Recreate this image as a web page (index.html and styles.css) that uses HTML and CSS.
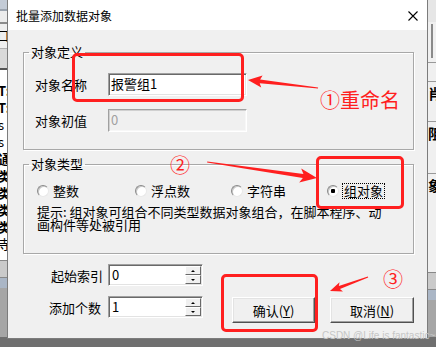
FILE: index.html
```html
<!DOCTYPE html>
<html lang="zh-CN">
<head>
    <meta charset="UTF-8">
    <title>批量添加数据对象</title>
    <link rel="stylesheet" href="styles.css">
</head>
<body>
    <div class="screen">
        <div class="backdrop">
            <div class="bg-left">
                <div class="blk tb"></div>
                <div class="blk lt"></div>
                <div class="blk lt2"><span>口</span></div>
                <div class="blk mid"></div>
                <div class="blk dk"></div>
                <div class="list">
                    <span class="bold">T:</span>
                    <span class="bold">T:</span>
                    <span>s</span>
                    <span>s</span>
                    <span class="bold">通</span>
                    <span class="bold">类</span>
                    <span class="bold">类</span>
                    <span class="bold">类</span>
                    <span class="bold">类</span>
                    <span>寺</span>
                </div>
                <div class="blk ln2"></div>
                <div class="blk blu"></div>
                <div class="blk rest"></div>
            </div>
            <div class="bg-right">
                <div class="blk lt"></div>
                <div class="blk bar"><i></i></div>
                <div class="cells">
                    <span>肖</span>
                    <span>阻</span>
                    <span class="gap">象</span>
                </div>
                <div class="blk ln2"></div>
                <div class="blk blu"></div>
                <div class="blk rest"></div>
            </div>
        </div>

        <div class="dialog">
            <div class="titlebar">
                <span class="title">批量添加数据对象</span>
                <svg class="close" width="10" height="10" viewBox="0 0 10 10">
                    <path d="M0.5 0.5 L9.5 9.5 M9.5 0.5 L0.5 9.5" stroke="#000" stroke-width="1.1" fill="none"/>
                </svg>
            </div>

            <div class="dialog-body">
                <fieldset class="group group-def">
                    <legend>对象定义</legend>
                    <div class="field-row">
                        <label>对象名称</label>
                        <div class="edit">报警组1</div>
                    </div>
                    <div class="field-row">
                        <label>对象初值</label>
                        <div class="edit disabled">0</div>
                    </div>
                </fieldset>

                <fieldset class="group group-type">
                    <legend>对象类型</legend>
                    <div class="radios">
                        <span class="radio"><i></i>整数</span>
                        <span class="radio"><i></i>浮点数</span>
                        <span class="radio"><i></i>字符串</span>
                        <span class="radio checked"><i></i><b class="focus">组对象</b></span>
                    </div>
                    <p class="hint">提示: 组对象可组合不同类型数据对象组合，在脚本程序、动<br>画构件等处被引用</p>
                </fieldset>

                <div class="bottom">
                    <div class="spins">
                        <div class="spin-row">
                            <span class="spin-label">起始索引</span>
                            <div class="spin">
                                <span class="spin-val">0</span>
                                <span class="spin-btns"><span class="up"></span><span class="down"></span></span>
                            </div>
                        </div>
                        <div class="spin-row">
                            <span class="spin-label">添加个数</span>
                            <div class="spin">
                                <span class="spin-val">1</span>
                                <span class="spin-btns"><span class="up"></span><span class="down"></span></span>
                            </div>
                        </div>
                    </div>
                    <div class="buttons">
                        <button class="btn default">确认(<u>Y</u>)</button>
                        <button class="btn">取消(<u>N</u>)</button>
                    </div>
                </div>
            </div>
        </div>

        <!-- annotations -->
        <div class="mark mark-name"></div>
        <div class="mark mark-type"></div>
        <div class="mark mark-ok"></div>

        <svg class="arrows" width="436" height="347" viewBox="0 0 436 347">
            <g fill="#ff1f1f">
                <polygon transform="translate(248 80) rotate(186.5)" points="-70.5,-0.5 -12,-1.8 -14,-6 0,0 -14,6 -12,1.8 -70.5,0.5"/>
                <polygon transform="translate(317 178) rotate(8.3)" points="-111,-0.6 -14,-2 -17,-7 0,0 -17,7 -14,2 -111,0.6"/>
                <polygon transform="translate(330 291) rotate(159.8)" points="-40.5,-0.5 -10,-1.6 -12,-5 0,0 -12,5 -10,1.6 -40.5,0.5"/>
            </g>
        </svg>

        <span class="note note-1">①重命名</span>
        <span class="note note-2">②</span>
        <span class="note note-3">③</span>

        <span class="watermark">CSDN @Life is fantastic~</span>
    </div>
</body>
</html>
```

FILE: styles.css
```css
* {
    box-sizing: border-box;
}

body {
    margin: 0;
    font-family: "Noto Sans CJK SC", sans-serif;
    font-size: 13px;
    color: #000;
}

.screen {
    position: relative;
    width: 436px;
    height: 347px;
    overflow: hidden;
    background: #6f6f6f;
}

/* window behind the dialog */
.backdrop {
    display: flex;
    justify-content: space-between;
    height: 337px;
}

.bg-left, .bg-right {
    display: flex;
    flex-direction: column;
    overflow: hidden;
    background: #a6a6a6;
}

.bg-left {
    width: 7px;
}

.bg-right {
    width: 8px;
}

.blk {
    flex: none;
}

.bg-left .tb {
    height: 11px;
    background: #c3cbd6;
    border-bottom: 2px solid #9aa3ae;
}

.bg-left .lt {
    height: 13px;
    background: #ececec;
    border-bottom: 2px solid #8c8c8c;
}

.bg-left .lt2 {
    height: 24px;
    overflow: hidden;
    background: #efefef;
    font-size: 12px;
    line-height: 24px;
    margin-left: -3px;
}

.bg-left .mid {
    height: 20px;
    background: #d9d9d9;
    border-top: 1px solid #b0b0b0;
}

.bg-left .dk {
    height: 2px;
    background: #555;
}

.bg-left .list {
    display: flex;
    flex-direction: column;
    height: 190px;
    padding-top: 12px;
    background: #fff;
    margin-left: -2px;
}

.bg-left .list span {
    display: block;
    height: 17px;
    overflow: hidden;
    font-size: 13px;
    line-height: 17px;
}

.bold {
    font-weight: bold;
}

.ln2 {
    height: 18px;
    background: #cacaca;
    border-top: 1px solid #888;
    border-bottom: 1px solid #888;
}

.blu {
    height: 10px;
    background: #aab6c6;
}

.rest {
    flex: 1;
    background: #a6a6a6;
}

.bg-right .lt {
    height: 22px;
    background: #e6e6e6;
}

.bg-right .bar {
    height: 40px;
    background: #f0f0f0;
    padding: 2px 0 0 3px;
}

.bg-right .bar i {
    display: block;
    width: 2px;
    height: 34px;
    background: #8a8a8a;
}

.bg-right .cells {
    display: flex;
    flex-direction: column;
    height: 210px;
    background: #f0f0f0;
    padding-top: 18px;
    border-top: 1px solid #999;
}

.bg-right .cells span {
    display: block;
    height: 22px;
    overflow: hidden;
    margin-bottom: 18px;
    border-top: 1px solid #999;
    padding-top: 2px;
    font-size: 14px;
    font-weight: bold;
    line-height: 18px;
}

.bg-right .cells .gap {
    margin-top: 12px;
}

/* dialog */
.dialog {
    position: absolute;
    left: 7px;
    top: -1px;
    width: 421px;
    height: 340px;
    background: #f0f0f0;
    border: 1px solid #7c7c7c;
}

.titlebar {
    display: flex;
    align-items: center;
    justify-content: space-between;
    height: 30px;
    padding: 1px 9px 0 8px;
    background: #fff;
}

.title {
    font-size: 12px;
}

.dialog-body {
    padding: 15px 13px 0 15px;
}

.group {
    margin: 0;
    min-width: 0;
    border: 1px solid #a8a8a8;
    box-shadow: 1px 1px 0 #fff, inset 1px 1px 0 #fff;
    padding: 14px 10px 17px 5px;
}

.group legend {
    padding: 0 2px;
    font-size: 13px;
    line-height: 14px;
}

.group-type {
    margin-top: 7px;
    padding: 12px 10px 22px 5px;
}

.field-row {
    display: flex;
    align-items: center;
    padding-left: 6px;
}

.field-row + .field-row {
    margin-top: 13px;
}

.field-row label {
    width: 73px;
}

.edit {
    width: 139px;
    height: 23px;
    padding-left: 2px;
    line-height: 20px;
    background: #fff;
    border: 1px solid;
    border-color: #a0a0a0 #fff #fff #a0a0a0;
    box-shadow: inset 1px 1px 0 #696969, inset -1px -1px 0 #e3e3e3;
}

.edit.disabled {
    background: #f0f0f0;
    color: #a0a0a0;
    box-shadow: inset 1px 1px 0 #d0d0d0, inset -1px -1px 0 #f7f7f7;
}

.radios {
    display: flex;
    align-items: center;
    height: 15px;
    padding-left: 8px;
}

.radio {
    flex: none;
    display: flex;
    align-items: center;
    gap: 4px;
    width: 96px;
}

.radio:first-child {
    width: 98px;
}

.radio.checked {
    width: auto;
}

.radio i {
    flex: none;
    width: 12px;
    height: 12px;
    border-radius: 50%;
    background: #fff;
    border: 1px solid;
    border-color: #8a8a8a #e8e8e8 #e8e8e8 #8a8a8a;
    box-shadow: inset 1px 1px 0 #c8c8c8;
}

.radio.checked i {
    background: radial-gradient(circle, #000 0 2px, #fff 2.5px);
}

.focus {
    font-weight: normal;
    padding: 0 1px;
    line-height: 14px;
    outline: 1px dotted #000;
    outline-offset: 0;
}

.hint {
    margin: 7px 0 0 8px;
    line-height: 13px;
}

.bottom {
    display: flex;
    justify-content: space-between;
    align-items: flex-start;
    margin-top: 10px;
}

.spins {
    flex: none;
    width: 180px;
}

.spin-row {
    display: flex;
    align-items: center;
    justify-content: flex-end;
}

.spin-row + .spin-row {
    margin-top: 10px;
}

.spin-label {
    margin-right: 5px;
    white-space: nowrap;
}

.spin-row:last-child .spin-label {
    margin-right: 7px;
}

.spin {
    flex: none;
    display: flex;
    width: 95px;
    height: 22px;
    background: #fff;
    border: 1px solid;
    border-color: #a0a0a0 #fff #fff #a0a0a0;
    box-shadow: inset 1px 1px 0 #696969, inset -1px -1px 0 #e3e3e3;
    padding: 1px;
}

.spin-val {
    flex: 1;
    padding-left: 2px;
    line-height: 18px;
}

.spin-btns {
    display: flex;
    flex-direction: column;
    width: 16px;
}

.spin-btns span {
    flex: 1;
    display: flex;
    align-items: center;
    justify-content: center;
    background: #f0f0f0;
    border: 1px solid;
    border-color: #fff #696969 #696969 #fff;
}

.spin-btns .up::before, .spin-btns .down::before {
    content: "";
    border-left: 2px solid transparent;
    border-right: 2px solid transparent;
}

.spin-btns .up::before {
    border-bottom: 2px solid #000;
}

.spin-btns .down::before {
    border-top: 2px solid #000;
}

.buttons {
    display: flex;
    gap: 15px;
    margin-top: 33px;
}

.btn {
    width: 83px;
    height: 26px;
    padding: 0;
    font-family: inherit;
    font-size: 13px;
    color: #000;
    background: #f0f0f0;
    border: 1px solid;
    border-color: #fff #505050 #505050 #fff;
    box-shadow: inset -1px -1px 0 #a0a0a0, inset 1px 1px 0 #e3e3e3;
}

.btn + .btn {
    width: 84px;
}

/* red annotations */
.mark {
    position: absolute;
    border: 3px solid #ff1f1f;
    border-radius: 5px;
}

.mark-name {
    left: 72px;
    top: 53px;
    width: 172px;
    height: 49px;
}

.mark-type {
    left: 316px;
    top: 156px;
    width: 88px;
    height: 53px;
}

.mark-ok {
    left: 221px;
    top: 274px;
    width: 97px;
    height: 58px;
}

.arrows {
    position: absolute;
    left: 0;
    top: 0;
}

.note {
    position: absolute;
    font-size: 20px;
    line-height: 20px;
    color: #ff1f1f;
}

.note-1 {
    left: 320px;
    top: 90px;
}

.note-2 {
    left: 170px;
    top: 155px;
}

.note-3 {
    left: 383px;
    top: 269px;
}

.watermark {
    position: absolute;
    left: 322px;
    top: 330px;
    font-family: "Liberation Sans", sans-serif;
    font-size: 10px;
    line-height: 12px;
    color: #c6c6c6;
    white-space: nowrap;
}
```
